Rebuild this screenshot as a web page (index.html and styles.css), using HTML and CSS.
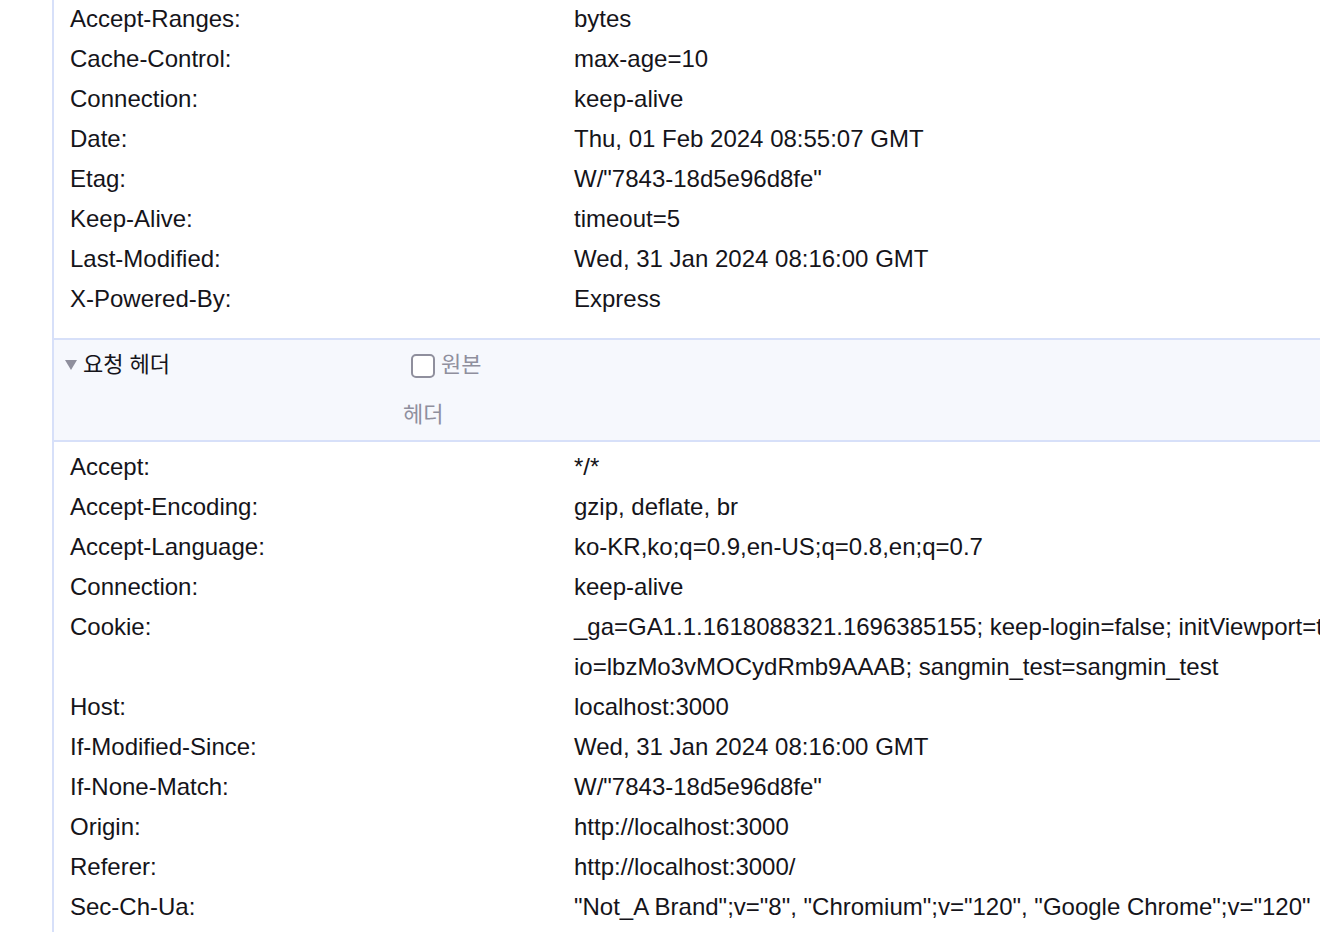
FILE: index.html
```html
<!DOCTYPE html>
<html lang="ko">
<head>
<meta charset="utf-8">
<title>Headers</title>
<link rel="stylesheet" href="styles.css">
</head>
<body>
<div class="panel">
  <div class="hdr-list hdr-list--first">
    <div class="hdr-name">Accept-Ranges:</div><div class="hdr-value">bytes</div>
    <div class="hdr-name">Cache-Control:</div><div class="hdr-value">max-age=10</div>
    <div class="hdr-name">Connection:</div><div class="hdr-value">keep-alive</div>
    <div class="hdr-name">Date:</div><div class="hdr-value">Thu, 01 Feb 2024 08:55:07 GMT</div>
    <div class="hdr-name">Etag:</div><div class="hdr-value">W/"7843-18d5e96d8fe"</div>
    <div class="hdr-name">Keep-Alive:</div><div class="hdr-value">timeout=5</div>
    <div class="hdr-name">Last-Modified:</div><div class="hdr-value">Wed, 31 Jan 2024 08:16:00 GMT</div>
    <div class="hdr-name">X-Powered-By:</div><div class="hdr-value">Express</div>
  </div>
  <div class="section-head">
    <div class="section-title">
      <svg class="twisty" width="12" height="10" viewBox="0 0 12 10"><path d="M0 0 H12 L6 10 Z" fill="#8f8f9d"/></svg><span>요청 헤더</span>
    </div>
    <label class="raw-toggle"><span class="checkbox"></span><span class="raw-text">원본 헤더</span></label>
  </div>
  <div class="hdr-list hdr-list--second">
    <div class="hdr-name">Accept:</div><div class="hdr-value">*/*</div>
    <div class="hdr-name">Accept-Encoding:</div><div class="hdr-value">gzip, deflate, br</div>
    <div class="hdr-name">Accept-Language:</div><div class="hdr-value">ko-KR,ko;q=0.9,en-US;q=0.8,en;q=0.7</div>
    <div class="hdr-name">Connection:</div><div class="hdr-value">keep-alive</div>
    <div class="hdr-name">Cookie:</div><div class="hdr-value">_ga=GA1.1.1618088321.1696385155; keep-login=false; initViewport=true; io=lbzMo3vMOCydRmb9AAAB; sangmin_test=sangmin_test</div>
    <div class="hdr-name">Host:</div><div class="hdr-value">localhost:3000</div>
    <div class="hdr-name">If-Modified-Since:</div><div class="hdr-value">Wed, 31 Jan 2024 08:16:00 GMT</div>
    <div class="hdr-name">If-None-Match:</div><div class="hdr-value">W/"7843-18d5e96d8fe"</div>
    <div class="hdr-name">Origin:</div><div class="hdr-value">http://localhost:3000</div>
    <div class="hdr-name">Referer:</div><div class="hdr-value">http://localhost:3000/</div>
    <div class="hdr-name">Sec-Ch-Ua:</div><div class="hdr-value">"Not_A Brand";v="8", "Chromium";v="120", "Google Chrome";v="120"</div>
  </div>
</div>
</body>
</html>
```

FILE: styles.css
```css
html, body {
  margin: 0;
  padding: 0;
  background: #ffffff;
  overflow: hidden;
}

body {
  font-family: "Liberation Sans", Arial, "Noto Sans CJK KR", sans-serif;
  font-size: 24px;
  color: #15141a;
}

.panel {
  margin-left: 52px;
  margin-top: -1px;
  border-left: 2px solid #d7e0f9;
  min-height: 1000px;
  width: 1400px;
}

.hdr-list {
  display: grid;
  grid-template-columns: 504px 820px;
  line-height: 40px;
  padding-left: 16px;
}

.hdr-list--first {
  padding-bottom: 19px;
}

.hdr-list--second {
  padding-top: 5px;
}

.hdr-value {
  overflow-wrap: break-word;
}

.section-head {
  display: flex;
  align-items: flex-start;
  height: 100px;
  background: #f6f8fd;
  border-top: 2px solid #d7e0f9;
  border-bottom: 2px solid #d7e0f9;
  line-height: 50px;
  font-family: "Liberation Sans", "Noto Sans CJK KR", sans-serif;
  font-size: 22px;
}

.section-title {
  width: 338px;
  padding-left: 11px;
  display: flex;
  align-items: center;
  height: 50px;
  color: #15141a;
}

.twisty {
  margin-right: 6px;
  flex: none;
}

.raw-toggle {
  width: 100px;
  color: #8f8f9d;
}

.checkbox {
  display: inline-block;
  width: 20px;
  height: 20px;
  border: 2px solid #8f8f9d;
  border-radius: 5px;
  background: #ffffff;
  margin-left: 8px;
  margin-right: 6px;
  vertical-align: -6px;
}
```
